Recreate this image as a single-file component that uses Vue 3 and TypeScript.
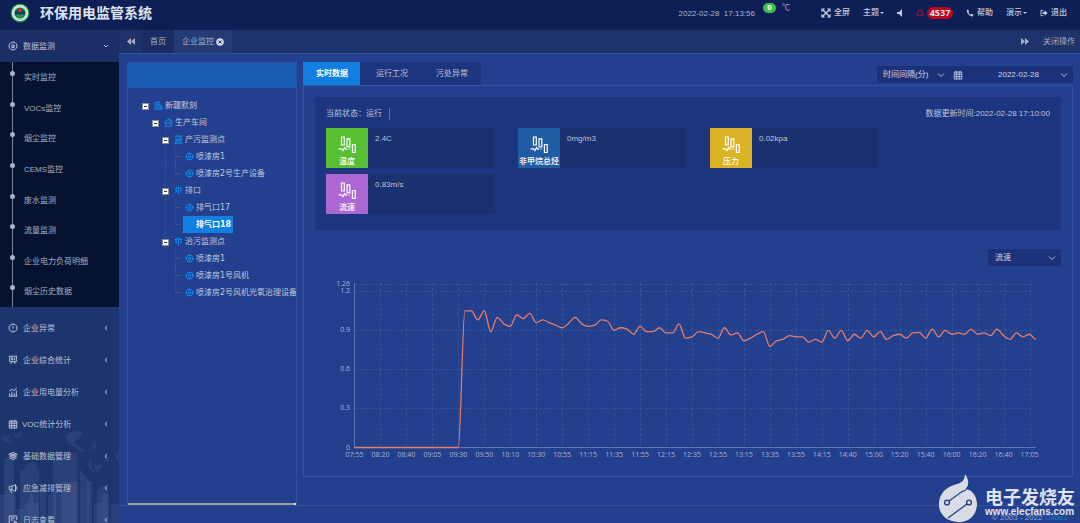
<script setup lang="ts">
import { computed, ref } from 'vue'

interface MenuItem { label: string; icon: string; tight?: boolean }
interface TreeRow { label: string; level: number; icon: string; last?: boolean }
interface Metric { label: string; value: string; tone: string }

const icons: Record<string, string> = {
  gauge: 'M6 1.2a4.8 4.8 0 1 0 .01 0M6 3.2v4M4.6 4.6v3.4h2.8V4.6',
  alert: 'M6 1.2a4.8 4.8 0 1 0 .01 0M6 3.4v3.4M6 8v1',
  board: 'M1 1.5h10M2 1.5v6.5h8V1.5M4 3.4h2v2.4H4zM8 3.5v3M3 10.8l2-2.6M9 10.8L7 8.2',
  bars: 'M2 11V7.5M4.7 11V5.5M7.4 11V7M10 11V4M1.5 5L5 2.5l2 1.8L10.5 1M1 11h10',
  calendar: 'M1.5 2.5h9v8.4h-9zM1.5 5h9M1.5 8h9M4.4 2v9M7.5 2v9M3.5 1v2M8.5 1v2',
  layers: 'M6 1.6L11 4 6 6.4 1 4zM1.6 6L6 8.2 10.4 6M1.6 8L6 10.2 10.4 8M3 4h6M4 5h4',
  horn: 'M1.5 4h3.2v4H1.5zM4.7 4L9 2v8L4.7 8M3 8l.8 3h1M10.6 4v4',
  log: 'M10.5 6V1.2h-9v9.6H6M3.4 3.6h5M3.4 6h3M7.5 7.5h2.4v2.2H7.5zM9.6 9.7l1.600 1.600',
  building: 'M1.5 11V2.500L6.500 1v10M6.500 4.500l4 1.500v5M.5 11h11M3 4.500h2M3 6.500h2M3 8.500h2M8.500 7v3',
  home: 'M.5 6.500L6 1.200l5.500 5.300M2.200 5.500v5.500h7.600V5.500M4.200 9a2 2 0 1 1 3.600 0M9.500 1.500V4',
  plant: 'M.5 11h11M2.500 11V4M5.500 11V4M9.500 11V1.500M1 1.500h10M4 5.500v3M7.500 4v5',
  outlet: 'M6 .8v10.400M1 3.500h3M8 3.500h3M1.500 6h2.500M8 6h2.500M2 8.800l2-1.600M10 8.800L8 7.200M3 1.500l1.500 2M9 1.500l-1.500 2',
  target: 'M6 1.600a4.400 4.400 0 1 0 .01 0M6 4.400a1.600 1.600 0 1 0 .01 0M6 .2v2.400M6 9.400v2.400M.2 6h2.400M9.400 6h2.400',
}

const subItems: string[] = ['实时监控', 'VOCs监控', '烟尘监控', 'CEMS监控', '废水监测', '流量监测', '企业电力负荷明细', '烟尘历史数据']
const menu: MenuItem[] = [
  { label: '企业异常', icon: 'alert' },
  { label: '企业综合统计', icon: 'board' },
  { label: '企业用电量分析', icon: 'bars' },
  { label: 'VOC统计分析', icon: 'calendar', tight: true },
  { label: '基础数据管理', icon: 'layers' },
  { label: '应急减排管理', icon: 'horn' },
  { label: '日志查看', icon: 'log' },
]

const tree: TreeRow[] = [
  { label: '新疆默刻', level: 0, icon: 'building' },
  { label: '生产车间', level: 1, icon: 'home' },
  { label: '产污监测点', level: 2, icon: 'plant' },
  { label: '喷漆房1', level: 3, icon: 'target' },
  { label: '喷漆房2号生产设备', level: 3, icon: 'target', last: true },
  { label: '排口', level: 2, icon: 'outlet' },
  { label: '排气口17', level: 3, icon: 'target' },
  { label: '排气口18', level: 3, icon: 'target', last: true },
  { label: '治污监测点', level: 2, icon: 'outlet' },
  { label: '喷漆房1', level: 3, icon: 'target' },
  { label: '喷漆房1号风机', level: 3, icon: 'target' },
  { label: '喷漆房2号风机光氧治理设备', level: 3, icon: 'target', last: true },
]
const selected = ref(7)

const tabs: string[] = ['实时数据', '运行工况', '污处异常']
const activeTab = ref(0)

const metrics: Metric[] = [
  { label: '温度', value: '2.4C', tone: 'green' },
  { label: '非甲烷总烃', value: '0mg/m3', tone: 'blue' },
  { label: '压力', value: '0.02kpa', tone: 'yellow' },
  { label: '流速', value: '0.83m/s', tone: 'purple' },
]

const times: string[] = ['07:55', '08:20', '08:40', '09:05', '09:30', '09:50', '10:10', '10:30', '10:55', '11:15', '11:35', '11:55', '12:15', '12:35', '12:55', '13:15', '13:35', '13:55', '14:15', '14:40', '15:00', '15:20', '15:40', '16:00', '16:20', '16:40', '17:05']
const levels: number[] = [1.26, 1.2, 0.9, 0.6, 0.3, 0]
const series: number[] = [
  ...Array<number>(17).fill(0),
  1.05, 1.05, 0.98, 1.05, 0.89, 1, 0.95, 0.93, 1.02, 0.99, 1.03, 0.96, 0.98, 0.96, 0.94, 0.92, 0.955, 1, 0.95,
  0.93, 0.94, 0.98, 0.97, 0.9, 0.92, 0.91, 0.87, 0.93, 0.89, 0.89, 0.92, 0.88, 0.88, 0.95, 0.84, 0.85, 0.89,
  0.88, 0.87, 0.84, 0.92, 0.865, 0.88, 0.82, 0.84, 0.87, 0.89, 0.775, 0.82, 0.83, 0.86, 0.85, 0.85, 0.81, 0.83,
  0.81, 0.9, 0.84, 0.9, 0.82, 0.87, 0.84, 0.9, 0.85, 0.89, 0.83, 0.86, 0.87, 0.84, 0.88, 0.885, 0.84, 0.91, 0.85,
  0.9, 0.87, 0.88, 0.87, 0.91, 0.87, 0.88, 0.86, 0.91, 0.86, 0.83, 0.88, 0.85, 0.87, 0.83,
]

const left = 39.5
const right = 721
const base = 175.5
const step = (right - left) / (series.length - 1)
const px = (i: number): number => left + i * step
const py = (v: number): number => base - (v * 164) / 1.26
const tickX = (i: number): number => Math.round(px(i * 4)) + 0.5
const lineY = (v: number): number => Math.round(py(v)) + 0.5

// Smooth curve whose slope is flat at every local extreme, so it never overshoots a reading.
const curve = computed<string>(() => {
  const ys = series.map(py)
  const slopes = ys.map((y, i) => {
    if (i === 0 || i === ys.length - 1) return 0
    const a = y - ys[i - 1]
    const b = ys[i + 1] - y
    return a * b <= 0 ? 0 : (2 * a * b) / (a + b)
  })
  let d = `M${px(0)} ${ys[0]}`
  for (let i = 1; i < ys.length; i++) {
    const c1 = `${px(i - 1) + step / 3} ${ys[i - 1] + slopes[i - 1] / 3}`
    const c2 = `${px(i) - step / 3} ${ys[i] - slopes[i] / 3}`
    d += `C${c1} ${c2} ${px(i)} ${ys[i]}`
  }
  return d
})
</script>

<template>
  <div class="shell">
    <header class="top">
      <svg class="logo" viewBox="0 0 20 20" aria-hidden="true">
        <circle cx="10" cy="10" r="9.400" fill="#138a4a" />
        <circle cx="10" cy="10" r="8.300" fill="#dfeee6" />
        <circle cx="10" cy="10" r="6.800" fill="none" stroke="#7fc49c" stroke-width="1" stroke-dasharray="1 1" />
        <circle cx="10" cy="10" r="5.600" fill="#0d7340" />
        <path d="M5 9.500q2.500-2.500 5-.5 2.500-2 5 .5v2q-2.500-1.500-5 .5-2.500-2-5-.5z" fill="#123a63" />
        <path d="M6 12.500q4-2 8 0l-1.500 2h-5z" fill="#2a9158" />
        <circle cx="10" cy="7.200" r="1.900" fill="#e0262b" />
      </svg>
      <h1>环保用电监管系统</h1>
      <div class="tools">
        <div class="weather">
          <time>2022-02-28&nbsp; 17:13:56</time>
          <span class="temp">0</span>
          <span class="unit">℃</span>
        </div>
        <button type="button"><svg class="i10" viewBox="0 0 12 12"><path d="M.5.5h4.500L.5 5zM11.500.5V5L7 .5zM.5 11.500V7L5 11.500zM11.500 11.500H7L11.500 7z" fill="currentColor" /><path d="M2 2l8 8M10 2l-8 8" stroke="currentColor" stroke-width="1.800" /></svg><span>全屏</span></button>
        <button type="button" class="drop"><span>主题</span><i class="caret" /></button>
        <button type="button" aria-label="声音"><svg class="i6" viewBox="0 0 6 8"><path d="M0 3h2l3-3v8L2 5H0z" fill="currentColor" /></svg></button>
        <button type="button" class="alarm"><svg class="i8" viewBox="0 0 12 12"><path d="M1 9.500Q2.800 8 2.800 5a3.200 3.200 0 0 1 6.400 0q0 3 1.800 4.500zM4.800 10.500q1.200 1.200 2.400 0M6 2V.5" fill="none" stroke="#b8102a" stroke-width="1.400" /></svg><b>4537</b></button>
        <button type="button"><svg class="i8" viewBox="0 0 12 12"><path d="M1 2l2-1.200 1.800 2.700L3.600 5Q4.500 7.500 7 8.500l1.500-1.300 2.700 1.600-1 2Q8.500 12 5 9.500 1 6.500 1 2z" fill="currentColor" /></svg><span>帮助</span></button>
        <button type="button" class="drop"><span>演示</span><i class="caret" /></button>
        <button type="button"><svg class="i8" viewBox="0 0 12 12"><path d="M5 2H1.500v8H5" fill="none" stroke="currentColor" stroke-width="1.400" /><path d="M4 4.600h3V2l4.500 4L7 10V7.400H4z" fill="currentColor" /></svg><span>退出</span></button>
      </div>
    </header>

    <div class="body">
      <nav class="side">
        <svg class="city" viewBox="0 0 119 96" aria-hidden="true">
          <g fill="#8fa6d8" fill-opacity=".11">
            <path d="M4 96V33q5-7 10 0v63zM20 96V43h5v-4l7-5 5 5v4h2v53zM53 96V26h24v70zM80 96V42l9 12v42zM97 96V62l11-5v39z" />
            <path d="M0 96V68h6V64h8v5h2v27zM17 96V82h8V76h3l4-16 2 16h5v20zM40 96V56h6v40zM48 96V68h3v-5h5v33zM61 96V55h17v41zM87 96V54h5v42zM94 96V76h8V67h7v29zM111 96V77h8v19z" />
            <path d="M65 9q9-7 17-5-1 9-9 11l13 9q-9 1-13-5-5-3-8-10z" />
            <path d="M2 7l4 3 4-3-2 5 5 3-6-1-2 2zM14 5l3 3 4-4-1 6-5 1zM90 14l4 4 3-3-1 5-3 4-1-5zM104 31l2-3 1 4 3-3-2 6-3-1zM113 24l3 4 3-3v9l-3-3zM94 37l4 2 1-5 2 4 3 1-4 3-4 3-1-3zM88 36l3-4 1 9 3 4-5-2z" />
          </g>
        </svg>
        <button type="button" class="item open">
          <svg class="mi" viewBox="0 0 12 12"><path :d="icons.gauge" /></svg>
          <span>数据监测</span>
          <svg class="chev" viewBox="0 0 6 6"><path d="M1 2l2 2 2-2" /></svg>
        </button>
        <ul class="sub">
          <li v-for="s in subItems" :key="s"><a href="#">{{ s }}</a></li>
        </ul>
        <div class="rest">
          <button v-for="m in menu" :key="m.label" type="button" class="item" :class="{ tight: m.tight }">
            <svg class="mi" viewBox="0 0 12 12"><path :d="icons[m.icon]" /></svg>
            <span>{{ m.label }}</span>
            <svg class="chev" viewBox="0 0 6 6"><path d="M4 1L2 3l2 2" /></svg>
          </button>
        </div>
      </nav>

      <div class="work">
        <div class="pages">
          <button type="button" class="arrow" aria-label="向左"><svg viewBox="0 0 8 7"><path d="M4 0v7L0 3.500zM8 0v7L4 3.500z" fill="currentColor" /></svg></button>
          <button type="button" class="page">首页</button>
          <button type="button" class="page current"><span>企业监控</span><svg viewBox="0 0 8 8"><circle cx="4" cy="4" r="3.800" fill="#d3d8e6" /><path d="M2.500 2.500l3 3M5.500 2.500l-3 3" stroke="#253b74" stroke-width="1" /></svg></button>
          <button type="button" class="arrow next" aria-label="向右"><svg viewBox="0 0 8 7"><path d="M0 0v7l4-3.500zM4 0v7l4-3.500z" fill="currentColor" /></svg></button>
          <button type="button" class="closer">关闭操作</button>
        </div>

        <main class="content">
          <aside class="treebox">
            <div class="treehead" />
            <ul class="tree">
              <li v-for="(n, i) in tree" :key="i" :class="'lv' + n.level">
                <button v-if="n.level < 3" type="button" class="toggle" :aria-label="'收起' + n.label" />
                <i v-else class="branch" :class="{ last: n.last }" />
                <button type="button" class="node" :class="{ on: selected === i }" @click="selected = i">
                  <svg viewBox="0 0 12 12"><path :d="icons[n.icon]" /></svg><span>{{ n.label }}</span>
                </button>
              </li>
            </ul>
            <div class="scroll" />
          </aside>

          <section class="detail">
            <div class="bar">
              <div class="tabs" role="tablist">
                <button v-for="(t, i) in tabs" :key="t" type="button" role="tab" :aria-selected="activeTab === i" :class="{ on: activeTab === i }" @click="activeTab = i">{{ t }}</button>
              </div>
              <div class="filters">
                <select class="interval" aria-label="时间间隔"><option>时间间隔(分)</option></select>
                <svg class="down" viewBox="0 0 8 6"><path d="M1 1.500l3 3 3-3" /></svg>
                <svg class="cal" viewBox="0 0 12 12"><path :d="icons.calendar" /></svg>
                <select class="date" aria-label="日期"><option>2022-02-28</option></select>
                <svg class="down" viewBox="0 0 8 6"><path d="M1 1.500l3 3 3-3" /></svg>
              </div>
            </div>

            <div class="pane">
              <div class="status">
                <div class="line">
                  <span class="state">当前状态：运行</span>
                  <span>数据更新时间:2022-02-28 17:10:00</span>
                </div>
                <div class="cards">
                  <article v-for="m in metrics" :key="m.label" class="card">
                    <div class="tile" :class="m.tone">
                      <svg viewBox="0 0 18 18"><path d="M3.500 1h2.800v8H3.500zM9 2.800h2.800v8H9zM14.400 8.500h2.800v8h-2.800zM.5 12.800h3l1.400 1.800 1.600-3 1.300 1.600h1.400M10.500 13.200h1" /></svg>
                      <span>{{ m.label }}</span>
                    </div>
                    <p>{{ m.value }}</p>
                  </article>
                </div>
              </div>

              <div class="pick">
                <select aria-label="监测指标"><option>流速</option></select>
                <svg class="down" viewBox="0 0 8 6"><path d="M1 1.500l3 3 3-3" /></svg>
              </div>

              <svg class="chart" viewBox="0 0 746 200" role="img" aria-label="流速">
                <g class="grid">
                  <line v-for="v in levels.slice(0, 5)" :key="v" :x1="left" :x2="right" :y1="lineY(v)" :y2="lineY(v)" />
                  <line v-for="(t, i) in times.slice(1)" :key="t" :x1="tickX(i + 1)" :x2="tickX(i + 1)" y1="11" :y2="base" />
                </g>
                <path class="axis" :d="`M${left} 11V${base}H${right}`" />
                <path class="flow" :d="curve" />
                <g class="labels">
                  <text v-for="v in levels" :key="v" x="35" :y="py(v) + 2" text-anchor="end">{{ v }}</text>
                  <text v-for="(t, i) in times" :key="t" :x="px(i * 4)" y="185" text-anchor="middle">{{ t }}</text>
                </g>
              </svg>
            </div>
          </section>
        </main>

        <footer class="foot">© 2003 - 2022 <a href="#">Glide1</a></footer>
      </div>
    </div>

    <div class="mark">
      <svg viewBox="0 0 40 50" aria-hidden="true">
        <path d="M27 1Q33 10 28 15.500 38 19 39 30 39 42 30 47 20 52 9 46 0 40 1 29 3 15 19 11 27 9 27 1z" fill="#d8dce4" />
        <path d="M11 28L24 18.500Q28 18 30 14M29 31L10 45" fill="none" stroke="#23408e" stroke-width="1.300" />
        <circle cx="9" cy="29.500" r="2.400" fill="#d8dce4" stroke="#23408e" stroke-width="1.400" />
        <circle cx="31" cy="29.500" r="2.400" fill="#d8dce4" stroke="#23408e" stroke-width="1.400" />
      </svg>
      <div><strong>电子发烧友</strong><span>www.elecfans.com</span></div>
    </div>
  </div>
</template>

<style>
body { margin: 0; background: #23408e; }
</style>

<style scoped>
* { box-sizing: border-box; }
.shell { position: relative; display: flex; flex-direction: column; height: 100vh; overflow: hidden; font: 8px/12px "Liberation Sans", "Noto Sans CJK SC", sans-serif; color: #bcc4da; background: #23408e; }
button, select { margin: 0; padding: 0; border: 0; border-radius: 0; background: none; color: inherit; font: inherit; appearance: none; outline: 0; cursor: pointer; white-space: nowrap; }
ul { list-style: none; margin: 0; padding: 0; }
a { color: inherit; text-decoration: none; }
svg { display: block; flex: none; }

.top { display: flex; align-items: center; height: 30px; flex: none; padding: 0 13px 4px 10px; background: #0e1f55; }
.logo { width: 20px; height: 20px; }
h1 { margin: 0 0 0 10px; font-size: 14px; line-height: 20px; font-weight: 700; color: #dfe3ee; white-space: nowrap; }
.tools { display: flex; align-items: center; gap: 13px; margin-left: auto; color: #c3c9da; }
.tools button { display: flex; align-items: center; gap: 3px; font-weight: 500; }
.tools .drop { gap: 1px; }
.weather { display: flex; align-items: center; gap: 8px; margin-right: 18px; color: #a9b2cc; }
.weather time { margin-top: 2px; }
.weather .temp { width: 13px; height: 10px; margin-bottom: 11px; border-radius: 5px; background: #3fbf4b; color: #fff; font-weight: 700; line-height: 10px; text-align: center; }
.weather .unit { margin: 0 0 11px -2px; }
.i10 { width: 10px; height: 10px; }
.i8 { width: 8px; height: 8px; }
.i6 { width: 6px; height: 8px; }
.caret { border: 2px solid transparent; border-top-color: currentColor; margin-top: 2px; }
.alarm b { width: 26px; height: 12px; border-radius: 6px; background: #b8081f; color: #f0dfe6; font: 700 9px/12px "Open Sans", sans-serif; text-align: center; }

.body { display: flex; flex: 1; min-height: 0; }
.side { position: relative; width: 119px; flex: none; overflow: hidden; background: #1e346c; }
.city { position: absolute; left: 0; bottom: 0; width: 100%; }
.item { position: relative; display: flex; align-items: center; gap: 5px; width: 100%; height: 32px; padding: 0 10px 0 8px; text-align: left; color: #b9c0d4; }
.item span { padding-top: 1px; }
.item.tight { gap: 4px; }
.item.open { background: #1b2f66; }
.mi { width: 10px; height: 10px; fill: none; stroke: currentColor; stroke-width: 1.200; }
.chev { width: 6px; height: 6px; margin-left: auto; fill: none; stroke: currentColor; stroke-width: 1; }
.sub { position: relative; display: flex; flex-direction: column; height: 245px; background: #051230; }
.sub::before { content: ""; position: absolute; left: 12px; top: 0; bottom: 0; width: 1px; background: #7b849c; }
.sub li { position: relative; flex: 1; padding: 10px 0 0 24px; color: #a9b0c2; }
.sub li::before { content: ""; position: absolute; left: 10px; top: 9px; width: 5px; height: 5px; border-radius: 50%; background: #aab2c8; }
.rest { padding-top: 5px; }

.work { display: flex; flex-direction: column; flex: 1; min-width: 0; }
.pages { display: flex; align-items: stretch; height: 24px; flex: none; padding-right: 5px; border-bottom: 1px solid #34509b; background: #1e3369; color: #a5acbf; }
.arrow { display: grid; place-items: center; width: 23px; }
.arrow svg { width: 8px; height: 7px; }
.page { padding: 0 8px; background: #1a2c61; }
.page.current { display: flex; align-items: center; gap: 2px; background: #253b74; }
.page svg { width: 8px; height: 8px; }
.next { margin-left: auto; margin-right: 7px; }

.content { display: flex; gap: 6px; flex: 1; min-height: 0; padding: 8px 7px 0 8px; }
.treebox { display: flex; flex-direction: column; width: 170px; flex: none; border: 1px solid #2f4d99; border-bottom: 0; overflow: hidden; }
.treehead { height: 25px; flex: none; background: #1a5cb4; }
.tree { padding: 9px 0 0 14px; font-family: "DejaVu Sans", "Noto Sans CJK SC", sans-serif; }
.tree li { position: relative; display: flex; align-items: center; gap: 3px; height: 17px; }
.tree li > * { flex: none; }
.tree .lv1 { padding-left: 10px; }
.tree .lv2 { padding-left: 20px; }
.tree .lv3 { padding-left: 32px; }
.lv2::before, .lv3::before { content: ""; position: absolute; left: 23px; top: 0; bottom: 0; border-left: 1px dotted #42558a; }
.lv2:has(~ .lv2) ~ .lv2 ~ .lv2 ~ .lv3::before { display: none; }
.toggle { position: relative; width: 7px; height: 7px; margin-top: 1px; border: 1px solid #8a8d9c; background: #fff; }
.toggle::after { content: ""; position: absolute; left: 1px; right: 1px; top: 2px; height: 1px; background: #333; }
.branch { align-self: stretch; width: 6px; margin-left: 1px; border-left: 1px dotted #42558a; background: linear-gradient(#42558a, #42558a) 0 8px / 6px 1px no-repeat; }
.branch.last { margin-bottom: 8px; }
.node { display: flex; align-items: center; gap: 2px; height: 17px; padding: 0 2px; color: #c0c8dd; }
.lv3 .node { margin-left: -1px; }
.node svg { width: 9px; height: 9px; fill: none; stroke: #0f86e6; stroke-width: 1.400; }
.node.on { background: #117ee0; color: #fff; font-weight: 700; }
.scroll { height: 2px; margin-top: auto; flex: none; background: #9a9da6; border-right: 2px solid #e4e6ea; }

.detail { flex: 1; min-width: 0; }
.bar { display: flex; align-items: flex-end; justify-content: space-between; height: 23px; }
.tabs { display: flex; align-self: stretch; background: #1d357e; border-radius: 2px 2px 0 0; }
.tabs button { padding: 0 14px; }
.tabs button:last-child { padding-right: 13px; }
.tabs button.on { margin-right: 2px; padding: 0 12px 0 13px; background: #117ee0; color: #fff; font-weight: 700; }
.filters { display: flex; align-items: center; width: 196px; height: 17px; margin-bottom: 2px; padding: 0 5px 0 6px; background: #1b327a; color: #ccd3e4; }
.interval { width: 54px; }
.date { flex: 1; padding-left: 35px; }
.down { width: 8px; height: 6px; fill: none; stroke: #b4bdd6; stroke-width: 1; }
.cal { width: 10px; height: 10px; margin-left: 8px; fill: none; stroke: #ccd3e4; stroke-width: 1; }
.pane { padding: 11px 11px 4px; border: 1px solid #3752a0; }
.status { min-height: 133px; padding: 11px; background: #1d357e; }
.line { display: flex; justify-content: space-between; align-items: center; height: 12px; margin-bottom: 8px; }
.state { padding-right: 7px; border-right: 1px solid #5570c4; }
.cards { display: grid; grid-template-columns: repeat(auto-fill, 169px); gap: 6px 23px; }
.card { display: flex; height: 40px; background: #1a306f; }
.card p { margin: 5px 7px; }
.tile { display: flex; flex-direction: column; align-items: center; width: 42px; padding-top: 8px; color: #fff; font-weight: 500; white-space: nowrap; }
.tile svg { width: 18px; height: 18px; fill: none; stroke: #fff; stroke-width: 1.200; }
.tile span { margin-top: 2px; }
.green { background: #57bf32; }
.blue { background: #205ca3; }
.yellow { background: #dab426; }
.purple { background: #ad67d3; }
.pick { display: flex; align-items: center; justify-content: space-between; width: 73px; height: 17px; margin: 19px 0 0 auto; padding: 0 5px 0 7px; background: #1b327a; color: #ccd3e4; }
.pick select { flex: 1; text-align: left; }
.chart { width: 100%; height: auto; margin-top: 6px; }
.grid line { stroke: #45609f; stroke-width: 1; stroke-dasharray: 3 2; opacity: .6; }
.axis { fill: none; stroke: #5a74b4; stroke-width: 1; }
.flow { fill: none; stroke: #e87d68; stroke-width: 1.300; }
.labels { fill: #a9b3ce; font: 7px "Open Sans", sans-serif; }

.foot { height: 18px; flex: none; padding: 6px 12px 0 0; border-top: 1px solid #34509b; text-align: right; color: #97a5c9; }
.foot a { color: #1479c9; }
.mark { position: absolute; right: 5px; bottom: 0; display: flex; align-items: flex-end; gap: 7px; color: #e0e4ee; pointer-events: none; }
.mark svg { width: 40px; height: 50px; }
.mark div { display: flex; flex-direction: column; padding-bottom: 6px; }
.mark strong { font-size: 18px; line-height: 18px; font-weight: 700; }
.mark span { font-size: 10px; line-height: 10px; font-weight: 700; }
</style>
